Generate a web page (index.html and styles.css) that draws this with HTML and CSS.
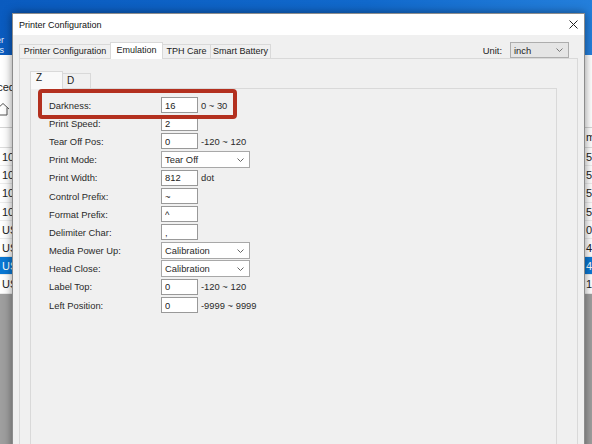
FILE: index.html
```html
<!DOCTYPE html>
<html lang="en">
   <head>
      <meta charset="UTF-8">
      <meta name="viewport" content="width=device-width, initial-scale=1.0">
      <title>Printer Configuration</title>
      <link rel="stylesheet" href="styles.css">
   </head>

   <body>
      <div class="desktop">

         <!-- desktop icon labels, mostly off screen -->
         <div class="desk-label">Printer<br>Tools</div>

         <!------------- APP BEHIND THE DIALOG ------------->
         <div class="app">
            <div class="app-title"></div>
            <div class="app-menu">Advanced</div>
            <div class="app-tools">
               <svg class="home" width="14" height="14" viewBox="0 0 14 14">
                  <path d="M1 7 L7 1.5 L13 7 M3 5.5 V13 H11 V5.5" fill="none" stroke="#555" stroke-width="1"/>
               </svg>
            </div>
            <div class="app-head"><span>Interface</span><span>mode</span></div>
            <div class="app-rows">
               <div class="app-row"><span>10.1.2.51</span><span>5720</span></div>
               <div class="app-row"><span>10.1.2.52</span><span>5721</span></div>
               <div class="app-row"><span>10.1.2.53</span><span>5722</span></div>
               <div class="app-row"><span>10.1.2.54</span><span>5810</span></div>
               <div class="app-row"><span>USB001</span><span>0231</span></div>
               <div class="app-row"><span>USB002</span><span>4 17</span></div>
               <div class="app-row selected"><span>USB003</span><span>4530</span></div>
               <div class="app-row"><span>USB004</span><span>1502</span></div>
            </div>
            <div class="app-empty"></div>
         </div>

         <!------------- DIALOG ------------->
         <div class="dialog">
            <div class="titlebar">
               <span>Printer Configuration</span>
               <svg class="close" width="9" height="9" viewBox="0 0 9 9">
                  <path d="M0.5 0.5 L8.5 8.5 M8.5 0.5 L0.5 8.5" stroke="#222" stroke-width="1"/>
               </svg>
            </div>

            <div class="dlg-body">
               <div class="tab-head">
                  <div class="tab w1">Printer Configuration</div>
                  <div class="tab active w2">Emulation</div>
                  <div class="tab w3">TPH Care</div>
                  <div class="tab w4">Smart Battery</div>

                  <div class="unit">
                     <span>Unit:</span>
                     <div class="combo unit-combo">
                        <span>inch</span>
                        <svg width="7" height="4" viewBox="0 0 7 4"><polyline points="0.5,0.5 3.5,3.5 6.5,0.5" fill="none" stroke="#777"/></svg>
                     </div>
                  </div>
               </div>

               <div class="tab-page">
                  <div class="subtabs">
                     <div class="subtab active">Z</div>
                     <div class="subtab">D</div>
                  </div>

                  <div class="sub-page">
                     <div class="form">
                        <!-- highlight drawn over the first row -->
                        <div class="callout"></div>

                        <label>Darkness:</label>
                        <div class="field"><input type="text" value="16"><span>0 ~ 30</span></div>

                        <label>Print Speed:</label>
                        <div class="field"><input type="text" value="2"></div>

                        <label>Tear Off Pos:</label>
                        <div class="field"><input type="text" value="0"><span>-120 ~ 120</span></div>

                        <label>Print Mode:</label>
                        <div class="field">
                           <div class="combo">
                              <span>Tear Off</span>
                              <svg width="7" height="4" viewBox="0 0 7 4"><polyline points="0.5,0.5 3.5,3.5 6.5,0.5" fill="none" stroke="#666"/></svg>
                           </div>
                        </div>

                        <label>Print Width:</label>
                        <div class="field"><input type="text" value="812"><span>dot</span></div>

                        <label>Control Prefix:</label>
                        <div class="field"><input type="text" value="~"></div>

                        <label>Format Prefix:</label>
                        <div class="field"><input type="text" value="^"></div>

                        <label>Delimiter Char:</label>
                        <div class="field"><input type="text" value=","></div>

                        <label>Media Power Up:</label>
                        <div class="field">
                           <div class="combo">
                              <span>Calibration</span>
                              <svg width="7" height="4" viewBox="0 0 7 4"><polyline points="0.5,0.5 3.5,3.5 6.5,0.5" fill="none" stroke="#666"/></svg>
                           </div>
                        </div>

                        <label>Head Close:</label>
                        <div class="field">
                           <div class="combo">
                              <span>Calibration</span>
                              <svg width="7" height="4" viewBox="0 0 7 4"><polyline points="0.5,0.5 3.5,3.5 6.5,0.5" fill="none" stroke="#666"/></svg>
                           </div>
                        </div>

                        <label>Label Top:</label>
                        <div class="field"><input type="text" value="0"><span>-120 ~ 120</span></div>

                        <label>Left Position:</label>
                        <div class="field"><input type="text" value="0"><span>-9999 ~ 9999</span></div>
                     </div>
                  </div>
               </div>
            </div>
         </div>

      </div>
   </body>
</html>
```

FILE: styles.css
```css
*{
   box-sizing: border-box;
   margin: 0;
   padding: 0;
}

body{
   width: 592px;
   height: 444px;
   overflow: hidden;
   font-family: "Liberation Sans", Arial, sans-serif;
   font-size: 9.4px;
   color: #222;
}

.desktop{
   position: relative;
   width: 592px;
   height: 444px;
   overflow: hidden;
   background: linear-gradient(100deg, #0a5bbf 0%, #1169cc 55%, #2a86e0 100%);
}

.desk-label{
   position: absolute;
   left: -42px;
   top: 35px;
   width: 46px;
   text-align: right;
   font-size: 9px;
   line-height: 10px;
   color: #e8f0fa;
}

/*************** BACKGROUND APP ***************/
.app{
   position: absolute;
   left: -40px;
   top: 55px;
   width: 700px;
   bottom: 0;
   background: #fff;
   display: flex;
   flex-direction: column;
   font-size: 11px;
   color: #222;
}

.app-title{
   height: 22px;
}

.app-menu{
   height: 20px;
   line-height: 20px;
   padding-left: 6px;
}

.app-tools{
   height: 31px;
   padding: 5px 0 0 36px;
   background: #fff;
   border-bottom: 1px solid #d5d5d5;
}

.app-head,
.app-row{
   display: flex;
   height: 18.2px;
   line-height: 18px;
}

.app-head{
   height: 20px;
   border-bottom: 1px solid #ddd;
}

.app-row{
   border-bottom: 1px solid #ececec;
}

.app-head span:first-child,
.app-row span:first-child{
   flex: 0 0 626px;
   padding-left: 42px;
}

.app-head span:first-child{
   padding-left: 70px;
}

.app-row.selected{
   background: #0a78d4;
   color: #fff;
}

.app-empty{
   flex: 1;
   background: #9f9f9f;
}

/******************* DIALOG *******************/
.dialog{
   position: absolute;
   left: 12px;
   top: 13px;
   width: 573px;
   height: 445px;
   border: 1px solid #8c8c8c;
   background: #f0f0f0;
   box-shadow: 0 0 9px rgba(0, 0, 0, 0.45);
   display: flex;
   flex-direction: column;
}

.titlebar{
   height: 21px;
   background: #fff;
   display: flex;
   align-items: center;
   justify-content: space-between;
   padding: 0 6px;
   font-size: 9px;
   color: #111;
}

.dlg-body{
   flex: 1;
   display: flex;
   flex-direction: column;
   padding: 7px 6px 0 6px;
   font-size: 9px;
}

.tab-head{
   display: flex;
   align-items: flex-end;
   height: 16px;
   position: relative;
   z-index: 1;
}

.tab{
   height: 14px;
   line-height: 13px;
   text-align: center;
   border: 1px solid #d9d9d9;
   border-bottom: none;
   background: #f0f0f0;
   margin-right: -1px;
   white-space: nowrap;
}

.tab.active{
   height: 17px;
   margin-bottom: -1px;
   line-height: 15px;
   background: #fff;
   position: relative;
   z-index: 2;
}

.w1{ width: 92px; }
.w2{ width: 53px; }
.w3{ width: 49px; }
.w4{ width: 61px; }

.unit{
   margin-left: auto;
   margin-right: 9px;
   align-self: flex-start;
   display: flex;
   align-items: center;
   gap: 8px;
   font-size: 9.4px;
}

.combo{
   display: flex;
   align-items: center;
   justify-content: space-between;
   width: 89px;
   height: 17px;
   padding: 0 5px 0 3px;
   background: #fff;
   border: 1px solid #a8a8a8;
}

.unit-combo{
   width: 59px;
   height: 16px;
   background: #e5e5e5;
   border-color: #adadad;
}

.tab-page{
   flex: 1;
   border: 1px solid #d9d9d9;
   background: #f0f0f0;
   padding: 12px 20px 0 10px;
   display: flex;
   flex-direction: column;
}

.subtabs{
   display: flex;
   align-items: flex-end;
   height: 17px;
   font-size: 10px;
   position: relative;
   z-index: 1;
}

.subtab{
   width: 29px;
   height: 15px;
   line-height: 14px;
   padding-left: 4px;
   border: 1px solid #d9d9d9;
   border-bottom: none;
   background: #f0f0f0;
}

.subtab.active{
   width: 33px;
   height: 18px;
   margin-bottom: -1px;
   margin-right: -1px;
   padding-left: 5px;
   line-height: 12px;
   background: #f9f9f9;
}

.sub-page{
   flex: 1;
   border: 1px solid #d9d9d9;
   padding: 7px 0 0 18px;
}

/******************** FORM ********************/
.form{
   position: relative;
   display: grid;
   grid-template-columns: 112px auto;
   grid-auto-rows: 18.2px;
   align-items: center;
   font-size: 9.4px;
   color: #2a2a2a;
}

.field{
   display: flex;
   align-items: center;
   gap: 3px;
}

.field input{
   width: 37px;
   height: 16px;
   padding: 0 3px;
   border: 1px solid #999;
   background: #fff;
   font-family: inherit;
   font-size: 9.4px;
   color: #222;
   outline: none;
}

.callout{
   position: absolute;
   left: -11px;
   top: -7px;
   width: 199px;
   height: 30px;
   border: 4px solid #b3301f;
   border-radius: 4px;
   z-index: 3;
}
```
